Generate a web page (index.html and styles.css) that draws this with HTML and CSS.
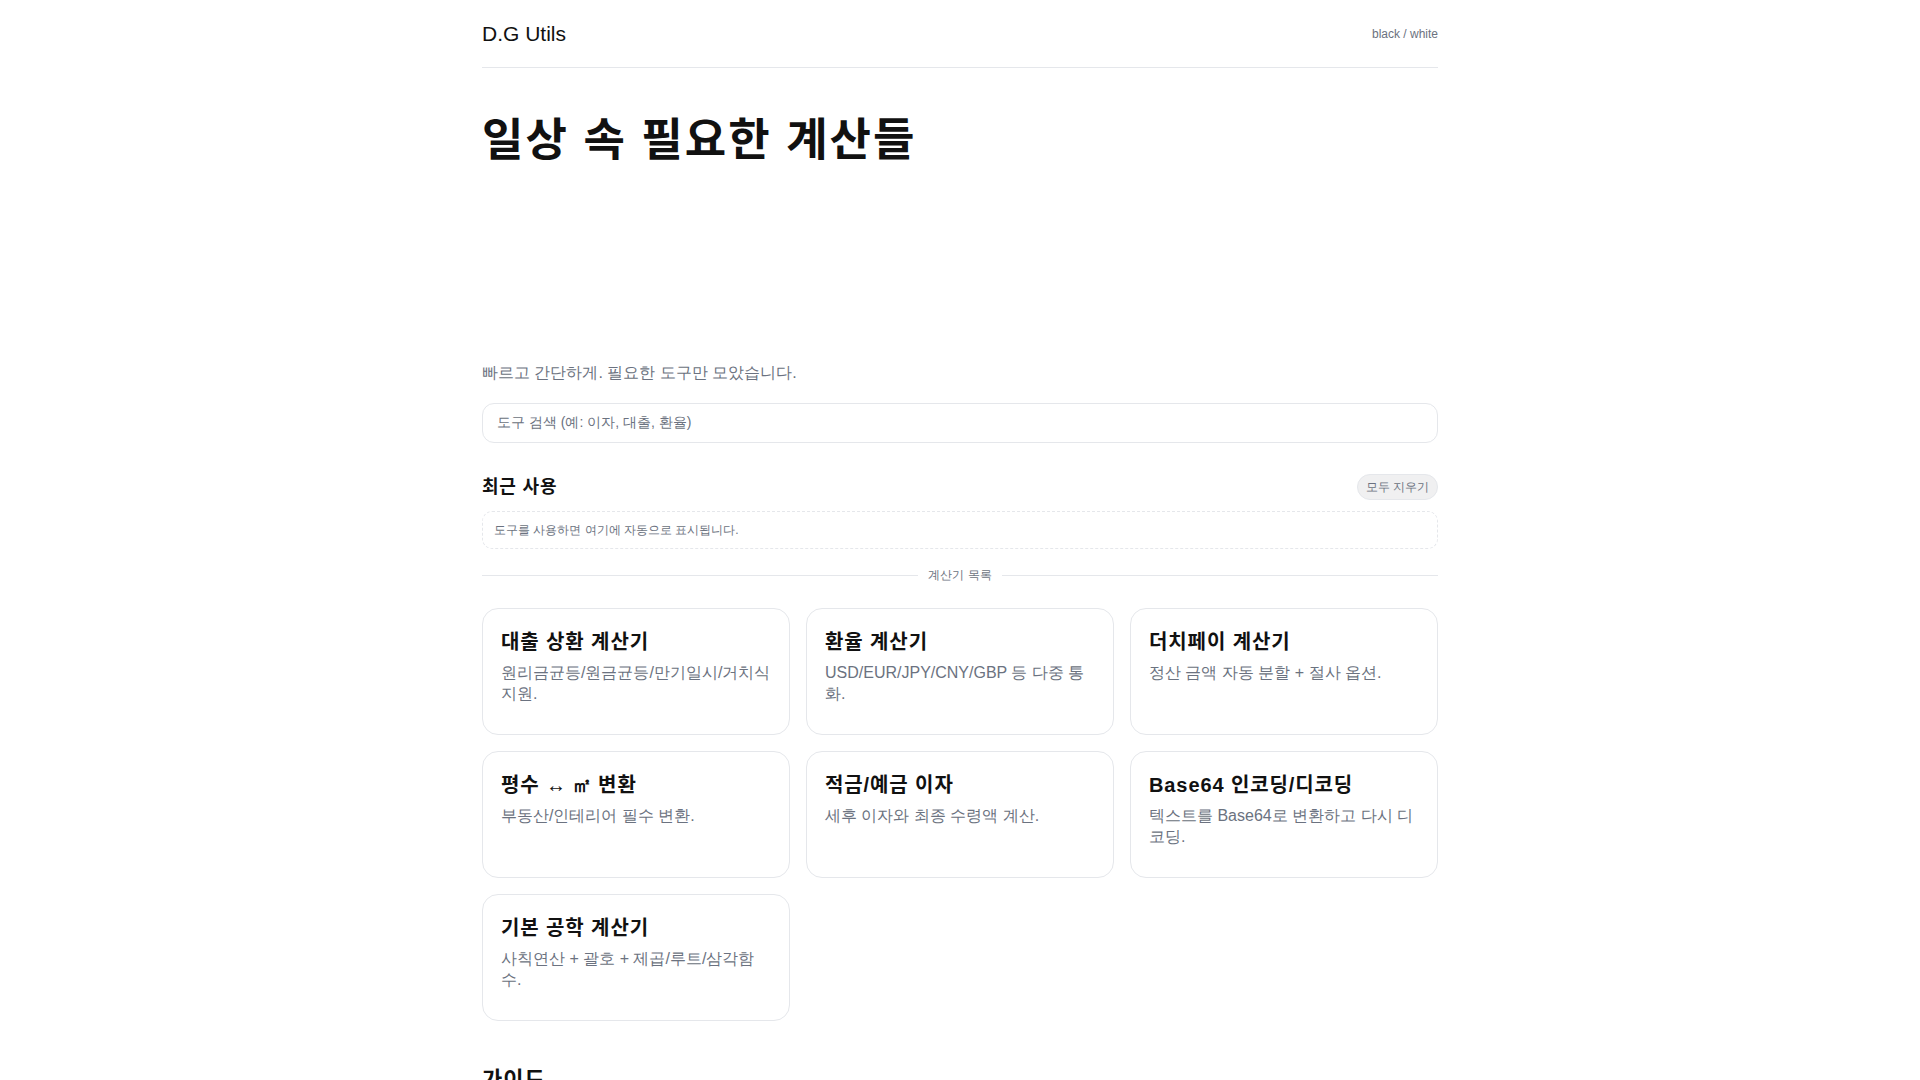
FILE: index.html
```html
<!DOCTYPE html>
<html lang="ko">
<head>
<meta charset="utf-8">
<title>D.G Utils</title>
<link rel="stylesheet" href="styles.css">
</head>
<body>
<div class="wrap">
  <header class="topbar">
    <div class="brand">D.G Utils</div>
    <div class="theme">black / white</div>
  </header>

  <h1 class="hero">일상 속 필요한 계산들</h1>
  <div class="ad-slot"></div>

  <p class="lead">빠르고 간단하게. 필요한 도구만 모았습니다.</p>
  <div class="search">도구 검색 (예: 이자, 대출, 환율)</div>

  <div class="recent-head">
    <h2 class="section-title">최근 사용</h2>
    <button class="pill">모두 지우기</button>
  </div>
  <div class="recent-box">도구를 사용하면 여기에 자동으로 표시됩니다.</div>

  <div class="divider"><span>계산기 목록</span></div>

  <div class="grid">
    <div class="card"><h3>대출 상환 계산기</h3><p>원리금균등/원금균등/만기일시/거치식 지원.</p></div>
    <div class="card"><h3>환율 계산기</h3><p>USD/EUR/JPY/CNY/GBP 등 다중 통화.</p></div>
    <div class="card"><h3>더치페이 계산기</h3><p>정산 금액 자동 분할 + 절사 옵션.</p></div>
    <div class="card"><h3>평수 <span class="sym">↔ ㎡</span> 변환</h3><p>부동산/인테리어 필수 변환.</p></div>
    <div class="card"><h3>적금/예금 이자</h3><p>세후 이자와 최종 수령액 계산.</p></div>
    <div class="card"><h3>Base64 인코딩/디코딩</h3><p>텍스트를 Base64로 변환하고 다시 디코딩.</p></div>
    <div class="card"><h3>기본 공학 계산기</h3><p>사칙연산 + 괄호 + 제곱/루트/삼각함수.</p></div>
  </div>

  <h2 class="guide">가이드</h2>
</div>
</body>
</html>
```

FILE: styles.css
```css
* { box-sizing: border-box; }
html, body { margin: 0; padding: 0; background: #ffffff; }
body {
  font-family: "Liberation Sans", sans-serif;
  color: #111111;
}
.wrap {
  width: 956px;
  margin: 0 auto;
}
.topbar {
  display: flex;
  justify-content: space-between;
  align-items: center;
  height: 68px;
  border-bottom: 1px solid #e5e7eb;
}
.brand { font-size: 21px; color: #111; }
.theme { font-size: 12px; color: #6b7280; }

.hero, .section-title, .card h3, .guide {
  font-family: "Liberation Sans", "Noto Sans CJK KR", sans-serif;
  font-weight: 700;
  letter-spacing: 0.045em;
}
.card h3 .sym {
  font-family: "Liberation Sans", sans-serif;
  letter-spacing: 0;
}

.hero {
  margin: 44px 0 0;
  font-size: 45px;
  line-height: 58px;
}
.ad-slot { height: 191px; }

.lead {
  margin: 0;
  font-size: 16px;
  line-height: 24px;
  color: #6b7280;
}
.search {
  margin-top: 18px;
  height: 40px;
  border: 1px solid #e5e7eb;
  border-radius: 12px;
  padding: 0 14px;
  display: flex;
  align-items: center;
  font-size: 14px;
  color: #6b7280;
}
.recent-head {
  margin-top: 31px;
  display: flex;
  justify-content: space-between;
  align-items: center;
  height: 26px;
}
.section-title { margin: 0; font-size: 18px; line-height: 24px; }
.pill {
  font-family: inherit;
  font-size: 12px;
  color: #6b7280;
  background: #f0f0f1;
  border: 1px solid #e5e7eb;
  border-radius: 999px;
  height: 26px;
  padding: 0 8px;
}
.recent-box {
  margin-top: 11px;
  border: 1px dashed #e5e7eb;
  border-radius: 10px;
  height: 38px;
  padding: 0 11px;
  display: flex;
  align-items: center;
  font-size: 12px;
  color: #6b7280;
}
.divider {
  margin-top: 18px;
  display: flex;
  align-items: center;
  gap: 10px;
  font-size: 12px;
  color: #6b7280;
  height: 16px;
}
.divider::before, .divider::after {
  content: "";
  flex: 1;
  height: 1px;
  background: #e5e7eb;
}
.grid {
  margin-top: 25px;
  display: grid;
  grid-template-columns: repeat(3, 1fr);
  gap: 16px;
}
.card {
  border: 1px solid #e5e7eb;
  border-radius: 16px;
  padding: 20px 18px 17px;
  min-height: 127px;
}
.card h3 {
  margin: 0;
  font-size: 20px;
  line-height: 26px;
}
.card p {
  margin: 7px 0 0;
  font-size: 16px;
  line-height: 21px;
  color: #6b7280;
}
.guide {
  margin: 45px 0 0;
  font-size: 22px;
  line-height: 28px;
}
```
